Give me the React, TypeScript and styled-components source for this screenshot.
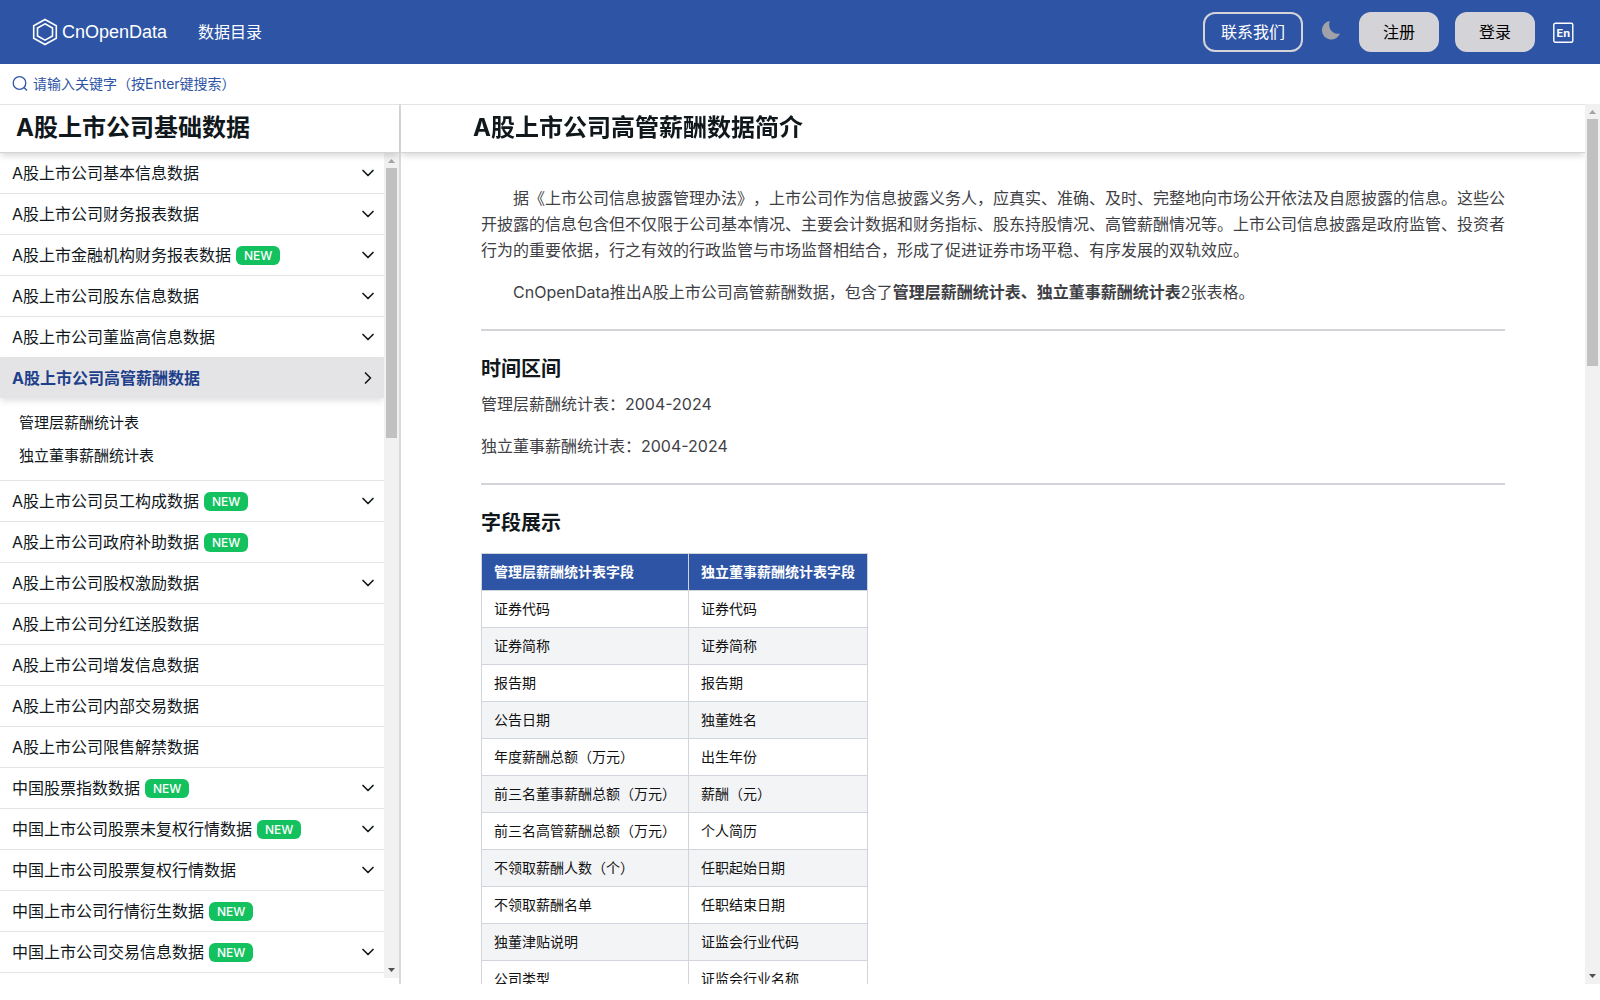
import React from 'react';
import styled, { createGlobalStyle, css } from 'styled-components';
import { ChevronDown, ChevronRight } from 'lucide-react';

const GlobalStyle = createGlobalStyle`
  *, *::before, *::after { box-sizing: border-box; }
  body {
    margin: 0;
    background: #fff;
    color: #11181c;
    font: 400 16px/24px Inter, "Noto Sans CJK SC", sans-serif;
    text-spacing-trim: space-all;
  }
  h1, h2, p, ul { margin: 0; padding: 0; }
  ul { list-style: none; }
  a { color: inherit; text-decoration: none; }
  button, input { font: inherit; }
`;

const Header = styled.header`
  display: flex;
  align-items: center;
  justify-content: space-between;
  height: 64px;
  padding: 0 25px 0 32px;
  background: #2e55a5;
  color: #fff;
`;

const HeaderGroup = styled.div<{ $gap: number }>`
  display: flex;
  align-items: center;
  gap: ${(p) => p.$gap}px;
`;

const Logo = styled.a`
  display: flex;
  align-items: center;
  gap: 4px;
  font: 400 18px/28px "Liberation Sans", Arial, sans-serif;
`;

const Button = styled.button<{ $outline?: boolean }>`
  height: 40px;
  border: 2px solid #d4d4d8;
  border-radius: 12px;
  cursor: pointer;
  ${(p) =>
    p.$outline
      ? css`padding: 0 16px; background: transparent; color: #fff;`
      : css`padding: 0 22px; background: #d4d4d8; color: #000;`}
`;

const IconButton = styled.button`
  display: flex;
  padding: 0;
  border: 0;
  background: none;
  color: inherit;
  cursor: pointer;
`;

const SearchBar = styled.label`
  display: flex;
  align-items: center;
  gap: 5px;
  height: 40px;
  padding: 0 12px;
  color: #2e55a5;
`;

const SearchInput = styled.input`
  flex: 1;
  padding: 0;
  border: 0;
  outline: 0;
  background: none;
  color: inherit;
  font-size: 14px;
  line-height: 20px;
  &::placeholder { color: #2e55a5; opacity: 1; }
`;

const Body = styled.div`
  display: flex;
  height: calc(100vh - 120px);
`;

const Sidebar = styled.aside`
  display: flex;
  flex: 0 0 401px;
  flex-direction: column;
  padding-bottom: 6px;
  border-right: 2px solid #d9d9dc;
`;

const TitleBar = styled.div`
  position: sticky;
  top: 0;
  z-index: 1;
  flex: none;
  height: 49px;
  padding: 0 16px;
  border-top: 1px solid #e4e4e7;
  border-bottom: 1px solid #d4d4d8;
  background: #fff;
  box-shadow: 0 4px 6px -1px rgba(0, 0, 0, 0.15);
`;

const Title = styled.h1`
  max-width: 1040px;
  margin: 0 auto;
  font-size: 24px;
  line-height: 46px;
  font-weight: 700;
`;

const ScrollRow = styled.div`
  display: flex;
  flex: 1;
  min-width: 0;
  min-height: 0;
`;

const ScrollPane = styled.div`
  flex: 1;
  min-width: 0;
  overflow-y: auto;
  scrollbar-width: none;
`;

const BarColumn = styled.div`
  display: flex;
  flex: 0 0 15px;
  flex-direction: column;
  background: #f1f1f1;
`;

const BarArrow = styled.svg`
  flex: none;
  display: block;
`;

const BarTrack = styled.div`
  flex: 1;
  padding: 0 2px;
`;

const BarThumb = styled.div<{ $share: number }>`
  height: ${(p) => p.$share}%;
  background: #c1c1c1;
`;

function ScrollBar({ share }: { share: number }) {
  return (
    <BarColumn aria-hidden="true">
      <BarArrow width="15" height="15" viewBox="0 0 15 15" fill="#a3a3a3">
        <path d="M4 10h7L7.500 6Z" />
      </BarArrow>
      <BarTrack>
        <BarThumb $share={share} />
      </BarTrack>
      <BarArrow width="15" height="15" viewBox="0 0 15 15" fill="#505050">
        <path d="M4 5h7L7.500 9Z" />
      </BarArrow>
    </BarColumn>
  );
}

const NavItem = styled.li`
  border-bottom: 1px solid #e4e4e7;
`;

const NavLink = styled.a<{ $active?: boolean }>`
  display: flex;
  align-items: center;
  gap: 5px;
  height: 40px;
  padding: 0 6px 0 12px;
  ${(p) =>
    p.$active &&
    css`
      background: #e4e4e7;
      color: #1e3f8a;
      font-weight: 700;
      box-shadow: 0 4px 6px -1px rgba(0, 0, 0, 0.12);
    `}
  svg {
    margin-left: auto;
    color: #11181c;
  }
`;

const Badge = styled.span`
  padding: 0 8px;
  border-radius: 6px;
  background: #13c15f;
  color: #fff;
  font-size: 12px;
  line-height: 19px;
  font-weight: 500;
`;

const SubList = styled.ul`
  padding: 8px 19px;
  font-size: 15px;
  line-height: 33px;
`;

const Article = styled.article`
  max-width: 1056px;
  margin: 0 auto;
  padding: 32px 16px;
  color: #3f3f46;
  line-height: 26px;
`;

const Paragraph = styled.p<{ $indent?: boolean }>`
  margin-bottom: 16px;
  text-indent: ${(p) => (p.$indent ? '2em' : '0')};
`;

const Rule = styled.hr`
  height: 2px;
  margin: 24px 0;
  border: 0;
  background: #d4d4d8;
`;

const Heading = styled.h2<{ $gap: number }>`
  margin-bottom: ${(p) => p.$gap}px;
  color: #11181c;
  font-size: 20px;
  line-height: 28px;
  font-weight: 600;
`;

const Table = styled.table`
  border-collapse: collapse;
  color: #111;
  font-size: 14px;
  line-height: 20px;
  th, td {
    padding: 8px 12px;
    border: 1px solid #d1d5db;
    text-align: left;
  }
  th { background: #2e55a5; color: #fff; font-weight: 700; }
  tbody tr:nth-child(even) { background: #f3f4f6; }
`;

type Entry = { name: string; isNew?: boolean; expandable?: boolean; children?: string[] };

const entries: Entry[] = [
  { name: 'A股上市公司基本信息数据', expandable: true },
  { name: 'A股上市公司财务报表数据', expandable: true },
  { name: 'A股上市金融机构财务报表数据', isNew: true, expandable: true },
  { name: 'A股上市公司股东信息数据', expandable: true },
  { name: 'A股上市公司董监高信息数据', expandable: true },
  { name: 'A股上市公司高管薪酬数据', children: ['管理层薪酬统计表', '独立董事薪酬统计表'] },
  { name: 'A股上市公司员工构成数据', isNew: true, expandable: true },
  { name: 'A股上市公司政府补助数据', isNew: true },
  { name: 'A股上市公司股权激励数据', expandable: true },
  { name: 'A股上市公司分红送股数据' },
  { name: 'A股上市公司增发信息数据' },
  { name: 'A股上市公司内部交易数据' },
  { name: 'A股上市公司限售解禁数据' },
  { name: '中国股票指数数据', isNew: true, expandable: true },
  { name: '中国上市公司股票未复权行情数据', isNew: true, expandable: true },
  { name: '中国上市公司股票复权行情数据', expandable: true },
  { name: '中国上市公司行情衍生数据', isNew: true },
  { name: '中国上市公司交易信息数据', isNew: true, expandable: true },
];

const fields: [string, string][] = [
  ['证券代码', '证券代码'],
  ['证券简称', '证券简称'],
  ['报告期', '报告期'],
  ['公告日期', '独董姓名'],
  ['年度薪酬总额（万元）', '出生年份'],
  ['前三名董事薪酬总额（万元）', '薪酬（元）'],
  ['前三名高管薪酬总额（万元）', '个人简历'],
  ['不领取薪酬人数（个）', '任职起始日期'],
  ['不领取薪酬名单', '任职结束日期'],
  ['独董津贴说明', '证监会行业代码'],
  ['公司类型', '证监会行业名称'],
];

export default function App() {
  return (
    <>
      <GlobalStyle />
      <Header>
        <HeaderGroup $gap={31}>
          <Logo href="#">
            <svg width="26" height="28" viewBox="0 0 26 28" fill="none" stroke="#fff" strokeWidth="1.6">
              <path d="M13 1.500 24.300 7.800v12.400L13 26.500 1.700 20.200V7.800Z" />
              <path d="M13 5.800 20.500 10v8L13 22.200 5.500 18v-8Z" />
            </svg>
            CnOpenData
          </Logo>
          <a href="#">数据目录</a>
        </HeaderGroup>
        <HeaderGroup $gap={16}>
          <Button $outline>联系我们</Button>
          <IconButton aria-label="切换主题">
            <svg width="24" height="24" viewBox="0 0 24 24" fill="#a1a1aa">
              <path d="M10.700 1.100A9.300 9.300 0 1 0 21 13.200C15.500 15.500 8 10 10.700 1.100Z" />
            </svg>
          </IconButton>
          <Button>注册</Button>
          <Button>登录</Button>
          <IconButton aria-label="English">
            <svg width="24" height="24" viewBox="0 0 24 24">
              <rect x="2.800" y="3.300" width="19" height="19" rx="1.500" fill="none" stroke="#fff" strokeWidth="1.400" />
              <text x="12.300" y="17" textAnchor="middle" fontFamily="Inter" fontSize="11" fontWeight="700" fill="#fff">En</text>
            </svg>
          </IconButton>
        </HeaderGroup>
      </Header>
      <SearchBar>
        <svg width="16" height="18" viewBox="0 0 16 18" fill="none" stroke="currentColor" strokeWidth="1.300">
          <circle cx="7.500" cy="8" r="6.300" />
          <path d="m12 12.500 3 3" />
        </svg>
        <SearchInput type="search" aria-label="搜索" placeholder="请输入关键字（按Enter键搜索）" />
      </SearchBar>
      <Body>
        <Sidebar>
          <TitleBar>
            <Title as="h2">A股上市公司基础数据</Title>
          </TitleBar>
          <ScrollRow>
            <ScrollPane as="nav">
              <ul>
                {entries.map((e) => (
                  <NavItem key={e.name}>
                    <NavLink href="#" $active={!!e.children}>
                      {e.name}
                      {e.isNew && <Badge>NEW</Badge>}
                      {e.expandable && <ChevronDown size={20} />}
                      {e.children && <ChevronRight size={20} />}
                    </NavLink>
                    {e.children && (
                      <SubList>
                        {e.children.map((c) => (
                          <li key={c}><a href="#">{c}</a></li>
                        ))}
                      </SubList>
                    )}
                  </NavItem>
                ))}
              </ul>
            </ScrollPane>
            <ScrollBar share={34} />
          </ScrollRow>
        </Sidebar>
        <ScrollRow>
          <ScrollPane as="main">
            <TitleBar>
              <Title>A股上市公司高管薪酬数据简介</Title>
            </TitleBar>
            <Article>
              <Paragraph $indent>
                据《上市公司信息披露管理办法》，上市公司作为信息披露义务人，应真实、准确、及时、完整地向市场公开依法及自愿披露的信息。这些公开披露的信息包含但不仅限于公司基本情况、主要会计数据和财务指标、股东持股情况、高管薪酬情况等。上市公司信息披露是政府监管、投资者行为的重要依据，行之有效的行政监管与市场监督相结合，形成了促进证券市场平稳、有序发展的双轨效应。
              </Paragraph>
              <Paragraph $indent>
                CnOpenData推出A股上市公司高管薪酬数据，包含了<strong>管理层薪酬统计表、独立董事薪酬统计表</strong>2张表格。
              </Paragraph>
              <Rule />
              <Heading $gap={8}>时间区间</Heading>
              <Paragraph>管理层薪酬统计表：2004-2024</Paragraph>
              <Paragraph>独立董事薪酬统计表：2004-2024</Paragraph>
              <Rule />
              <Heading $gap={16}>字段展示</Heading>
              <Table>
                <thead>
                  <tr><th scope="col">管理层薪酬统计表字段</th><th scope="col">独立董事薪酬统计表字段</th></tr>
                </thead>
                <tbody>
                  {fields.map(([a, b]) => (
                    <tr key={a}><td>{a}</td><td>{b}</td></tr>
                  ))}
                </tbody>
              </Table>
            </Article>
          </ScrollPane>
          <ScrollBar share={29} />
        </ScrollRow>
      </Body>
    </>
  );
}
